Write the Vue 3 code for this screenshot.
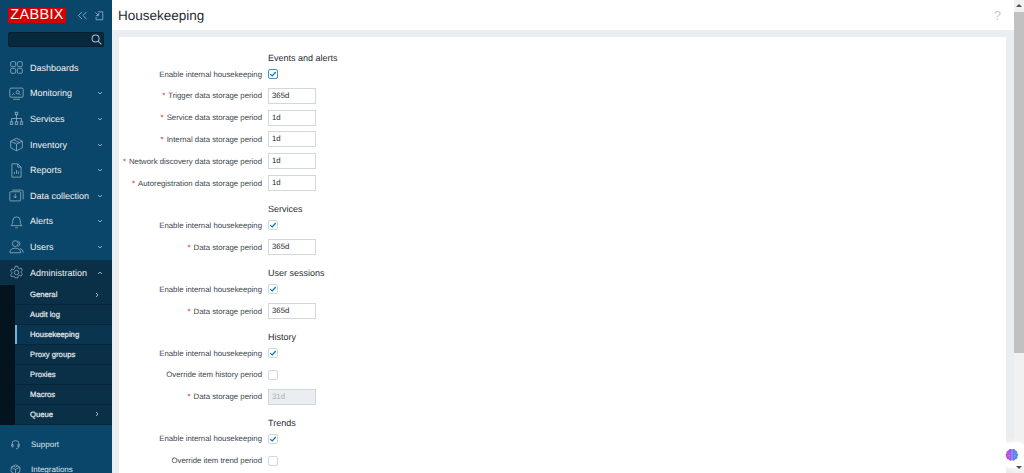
<script setup>
const nav = [
  { label: 'Dashboards', icon: 'dash' },
  { label: 'Monitoring', icon: 'mon', arrow: true },
  { label: 'Services', icon: 'svc', arrow: true },
  { label: 'Inventory', icon: 'inv', arrow: true },
  { label: 'Reports', icon: 'rep', arrow: true },
  { label: 'Data collection', icon: 'data', arrow: true },
  { label: 'Alerts', icon: 'bell', arrow: true },
  { label: 'Users', icon: 'users', arrow: true },
]
const sub = [
  { label: 'General', more: true },
  { label: 'Audit log' },
  { label: 'Housekeeping', active: true },
  { label: 'Proxy groups' },
  { label: 'Proxies' },
  { label: 'Macros' },
  { label: 'Queue', more: true },
]
const sections = [
  { title: 'Events and alerts', rows: [
    { label: 'Enable internal housekeeping', check: true, focus: true },
    { label: 'Trigger data storage period', req: true, value: '365d' },
    { label: 'Service data storage period', req: true, value: '1d' },
    { label: 'Internal data storage period', req: true, value: '1d' },
    { label: 'Network discovery data storage period', req: true, value: '1d' },
    { label: 'Autoregistration data storage period', req: true, value: '1d' },
  ]},
  { title: 'Services', rows: [
    { label: 'Enable internal housekeeping', check: true },
    { label: 'Data storage period', req: true, value: '365d' },
  ]},
  { title: 'User sessions', rows: [
    { label: 'Enable internal housekeeping', check: true },
    { label: 'Data storage period', req: true, value: '365d' },
  ]},
  { title: 'History', rows: [
    { label: 'Enable internal housekeeping', check: true },
    { label: 'Override item history period', check: false },
    { label: 'Data storage period', req: true, value: '31d', disabled: true },
  ]},
  { title: 'Trends', rows: [
    { label: 'Enable internal housekeeping', check: true },
    { label: 'Override item trend period', check: false },
  ]},
]
</script>

<template>
  <div class="page">
    <aside class="side">
      <div class="brand">
        <span class="logo">ZABBIX</span>
        <svg class="tool" viewBox="0 0 12 10" width="11" height="9"><path d="M5.500 1 1.500 5l4 4M10.500 1l-4 4 4 4" /></svg>
        <svg class="tool" viewBox="0 0 12 12" width="10" height="10"><path d="M5 1H10.500V10.500H2.500V7M1.500 1.500l4 4M5.500 2.500v3h-3" /></svg>
      </div>
      <div class="search">
        <svg viewBox="0 0 12 12" width="11" height="11"><circle cx="5" cy="5" r="3.800" /><path d="M8 8l3.300 3.300" /></svg>
      </div>
      <nav class="menu">
        <div v-for="n in nav" :key="n.label" class="item">
          <svg class="ico" viewBox="0 0 18 18" width="15" height="15">
            <template v-if="n.icon === 'dash'">
              <rect x="2" y="2" width="6" height="6" rx="1.500" /><rect x="10" y="2" width="6" height="6" rx="1.500" /><rect x="2" y="10" width="6" height="6" rx="1.500" /><rect x="10" y="10" width="6" height="6" rx="1.500" />
            </template>
            <template v-else-if="n.icon === 'mon'">
              <rect x="1" y="2.500" width="16" height="11" rx="1.500" /><path d="M5 16h8M3.500 11l2-2 1.500 1.500" /><circle cx="10.500" cy="7.500" r="2" /><path d="M12 9l2 2" />
            </template>
            <template v-else-if="n.icon === 'svc'">
              <rect x="7.500" y="1.500" width="3" height="3" /><path d="M9 4.500V9M3 13V9h12v4M9 9v4" /><rect x="1.500" y="13" width="3" height="3" /><rect x="7.500" y="13" width="3" height="3" /><rect x="13.500" y="13" width="3" height="3" />
            </template>
            <template v-else-if="n.icon === 'inv'">
              <path d="M9 1.500 16 5v8l-7 3.500L2 13V5zM2 5l7 3.500L16 5M9 8.500v8M5.500 3.300l7 3.500" />
            </template>
            <template v-else-if="n.icon === 'rep'">
              <path d="M3.500 1h7l4 4v12h-11zM10.500 1v4h4M6.500 13v-2M9 13V8.500M11.500 13v-3" />
            </template>
            <template v-else-if="n.icon === 'data'">
              <rect x="1" y="4.500" width="13" height="11" rx="1" /><path d="M4 2.500h11a2 2 0 0 1 2 2v9M7.500 7v5M5.500 10l2 2 2-2" />
            </template>
            <template v-else-if="n.icon === 'bell'">
              <path d="M2.500 14c1.500-1.500 2-3 2-6a4.500 4.500 0 0 1 9 0c0 3 .5 4.500 2 6zM7.500 16.500h3" />
            </template>
            <template v-else>
              <circle cx="7.500" cy="5.500" r="3.500" /><path d="M1 16.500c0-3.500 2.500-5.500 6.500-5.500s6.500 2 6.500 5.500zM11 2.300a3.500 3.500 0 0 1 0 6.400M13 11.500c2.500.5 4 2 4 5" />
            </template>
          </svg>
          <span class="lbl">{{ n.label }}</span>
          <svg v-if="n.arrow" class="chev" viewBox="0 0 6 4" width="6" height="4"><path d="M1 1l2 2 2-2" /></svg>
        </div>
        <div class="item open">
          <svg class="ico" viewBox="0 0 18 18" width="15" height="15">
            <path d="M7.500 1.500h3l.5 2.200 1.500.8 2.100-.8 1.500 2.600-1.600 1.500v1.400l1.600 1.500-1.500 2.600-2.100-.8-1.500.8-.5 2.200h-3L7 14.300l-1.500-.8-2.100.8-1.500-2.600L3.500 10.200V8.800L1.900 7.300l1.500-2.600 2.100.8L7 3.700z" /><circle cx="9" cy="9" r="2.700" />
          </svg>
          <span class="lbl">Administration</span>
          <svg class="chev up" viewBox="0 0 6 4" width="6" height="4"><path d="M1 3l2-2 2 2" /></svg>
        </div>
        <div class="submenu">
          <div v-for="s in sub" :key="s.label" class="subitem" :class="{ active: s.active }">
            <span>{{ s.label }}</span>
            <svg v-if="s.more" class="more" viewBox="0 0 4 6" width="4" height="6"><path d="M1 1l2 2-2 2" /></svg>
          </div>
        </div>
      </nav>
      <div class="bottom">
        <div class="bot">
          <svg class="ico small" viewBox="0 0 14 14" width="11" height="11"><path d="M2.500 9V6.500a4.500 4.500 0 0 1 9 0V9M2.500 7v3h1.500V7zM10 7v3h1.500V7zM11 10c0 1.500-1.500 2.500-3.500 2.500" /></svg>
          <span>Support</span>
        </div>
        <div class="bot">
          <svg class="ico small" viewBox="0 0 14 14" width="11" height="11"><path d="M7 1l5.500 3v6L7 13l-5.500-3V4zM1.500 4 7 7l5.500-3M7 7v6M4.500 2.500 7 4l2.500-1.500" /></svg>
          <span>Integrations</span>
        </div>
      </div>
    </aside>

    <main class="main">
      <header class="head">
        <h1>Housekeeping</h1>
        <span class="help">?</span>
      </header>
      <div class="body">
        <section class="card">
          <div v-for="sec in sections" :key="sec.title" class="sec">
            <div class="row title"><span></span><h2>{{ sec.title }}</h2></div>
            <div v-for="(r, i) in sec.rows" :key="i" class="row">
              <label><span v-if="r.req" class="req">*</span>{{ r.label }}</label>
              <div v-if="r.value" class="input" :class="{ disabled: r.disabled }">{{ r.value }}</div>
              <div v-else class="box" :class="{ focus: r.focus }">
                <svg v-if="r.check" viewBox="0 0 10 10" width="8" height="8"><path d="M1.500 5.200 4 7.500 8.500 2.500" /></svg>
              </div>
            </div>
          </div>
        </section>
      </div>
    </main>

    <div class="scroll">
      <span class="tri"></span>
      <span class="thumb"></span>
      <span class="tri down"></span>
    </div>

    <div class="ai">
      <svg viewBox="0 0 18 18" width="14" height="14">
        <defs>
          <linearGradient id="brain" x1="0" y1="0" x2="1" y2="0">
            <stop offset="0" stop-color="#d24bd8" />
            <stop offset=".5" stop-color="#7a5cf0" />
            <stop offset="1" stop-color="#36a4ee" />
          </linearGradient>
        </defs>
        <path fill="url(#brain)" d="M8.700 1.500C6.500.8 4.800 1.600 4.400 3.200 2.500 3.500 1.500 5 2 6.800.6 8 .6 10 1.800 11.200c-.4 1.900 1 3.300 2.700 3.300.8 1.800 2.800 2.400 4.200 1.200zM9.300 1.500c1.900-.7 3.600.1 4 1.700 1.900.3 2.900 1.800 2.400 3.600 1.400 1.200 1.400 3.200.2 4.400.4 1.900-1 3.300-2.700 3.300-.8 1.800-2.800 2.400-3.900 1.200z" />
        <path class="veins" d="M5 6.500h2M4 10h3M5.500 13l1.500-1M11 6.500h2M11 10h3M11 12l1.500 1" />
      </svg>
    </div>
  </div>
</template>

<style>
html, body { margin: 0; height: 100%; overflow: hidden; background: #ebeef0; }
</style>

<style scoped>
.page {
  position: relative;
  display: flex;
  width: 1024px;
  height: 473px;
  overflow: hidden;
  font-family: "Liberation Sans", Arial, sans-serif;
  text-rendering: geometricPrecision;
  background: #ebeef0;
}
.side {
  flex: 0 0 112px;
  width: 112px;
  height: 473px;
  background: #0a466a;
  color: #f2f2f2;
  overflow: hidden;
  display: flex;
  flex-direction: column;
}
.side > * { flex: none; }
.brand {
  display: flex;
  align-items: center;
  padding: 8px 0 0 8px;
  height: 15px;
}
.logo {
  width: 58px;
  height: 15px;
  background: #d40000;
  color: #fff;
  font-size: 14.500px;
  line-height: 15px;
  text-align: center;
  letter-spacing: .3px;
  margin-right: 11px;
}
.tool { fill: none; stroke: #8fb0c6; stroke-width: 1; margin-right: 6px; }
.search {
  margin: 9px 0 0 8px;
  width: 96px;
  height: 15px;
  background: #08293d;
  border: 1px solid #062031;
  border-radius: 2px;
  display: flex;
  align-items: center;
  justify-content: flex-end;
  box-sizing: border-box;
}
.search svg { fill: none; stroke: #aebfca; stroke-width: 1.100; margin-right: 1px; }
.menu { margin-top: 8px; }
.item {
  display: flex;
  align-items: center;
  height: 25.600px;
  padding-left: 8.500px;
  box-sizing: border-box;
  font-size: 9px;
}
.item.open { background: #0a3048; }
.ico {
  flex: none;
  fill: none;
  stroke: #9db8ca;
  stroke-width: .9;
  margin-right: 6.500px;
}
.lbl { flex: 1; white-space: nowrap; }
.chev { fill: none; stroke: #8fb0c6; stroke-width: 1; margin-right: 9px; flex: none; }
.submenu {
  padding-left: 15px;
  background: #04141f;
}
.subitem {
  display: flex;
  align-items: center;
  justify-content: space-between;
  height: 19.900px;
  padding: 0 13px 0 15px;
  box-sizing: border-box;
  font-size: 7.700px;
  color: #e4eaee;
  -webkit-text-stroke: .2px #e4eaee;
  background: #0a3048;
  border-bottom: 1px solid #08263a;
}
.subitem.active {
  background: #0a3551;
  color: #f2f2f2;
  box-shadow: inset 2px 0 0 #69b4ea;
}
.more { fill: none; stroke: #9fb6c4; stroke-width: 1; }
.bottom { margin-top: 6.800px; }
.bot {
  display: flex;
  align-items: center;
  height: 25.300px;
  padding-left: 10px;
  font-size: 8px;
  color: #dfe6ea;
}
.ico.small { margin-right: 10px; }

.main { flex: 0 0 902px; width: 902px; display: flex; flex-direction: column; min-width: 0; }
.head {
  height: 30px;
  background: #fff;
  display: flex;
  align-items: center;
  justify-content: space-between;
  padding: 0 13px 0 6px;
  flex: none;
}
h1 {
  margin: 0;
  font-size: 13.500px;
  font-weight: normal;
  color: #1f2c33;
}
.help { font-size: 13px; color: #c2ccd2; }
.body { flex: 1; padding: 7px 8px 0 7px; overflow: hidden; }
.card { background: #fff; height: 500px; padding-top: 16px; box-sizing: border-box; }
.sec { margin-bottom: 10.200px; }
.row {
  display: grid;
  grid-template-columns: 143px 48px;
  column-gap: 6px;
  align-items: center;
  height: 21.800px;
  font-size: 7.800px;
  color: #1f2c33;
}
.row.title { height: 10.200px; }
label { text-align: right; white-space: nowrap; justify-self: end; color: #3a464d; }
.req { color: #e33734; margin-right: 3px; }
h2 { margin: 0; font-size: 9px; font-weight: normal; color: #1f2c33; white-space: nowrap; }
.input {
  width: 48px;
  height: 16px;
  border: 1px solid #cfd8dd;
  box-sizing: border-box;
  padding-left: 3px;
  line-height: 14px;
  background: #fff;
  color: #1f2c33;
}
.input.disabled { background: #ebeef0; color: #a5b0b7; }
.box {
  width: 10px;
  height: 10px;
  border: 1px solid #cfd8dd;
  border-radius: 2px;
  background: #fff;
  box-sizing: border-box;
  display: flex;
  align-items: center;
  justify-content: center;
}
.box.focus { border-color: #4a90c2; }
.box svg { fill: none; stroke: #0275b8; stroke-width: 1.500; flex: none; }

.scroll {
  position: absolute;
  right: 0;
  top: 0;
  bottom: 0;
  width: 10px;
  background: #f1f1f1;
  display: flex;
  flex-direction: column;
  align-items: center;
}
.tri {
  flex: none;
  width: 0;
  height: 0;
  margin-top: 4px;
  border-left: 3px solid transparent;
  border-right: 3px solid transparent;
  border-bottom: 3px solid #505050;
}
.tri.down {
  position: relative;
  z-index: 2;
  margin-top: auto;
  margin-bottom: 4px;
  border-bottom: 0;
  border-top: 3px solid #505050;
}
.thumb { flex: none; width: 10px; height: 341px; margin-top: 5px; background: #c1c1c1; }
.ai {
  position: absolute;
  right: -5px;
  top: 442px;
  width: 30px;
  height: 26px;
  border-radius: 13px;
  background: #fff;
  box-shadow: 0 0 6px rgba(255, 255, 255, .7);
  display: flex;
  align-items: center;
  padding-left: 5.500px;
  box-sizing: border-box;
}
.veins { fill: none; stroke: #fff; stroke-width: .6; opacity: .7; }
</style>
